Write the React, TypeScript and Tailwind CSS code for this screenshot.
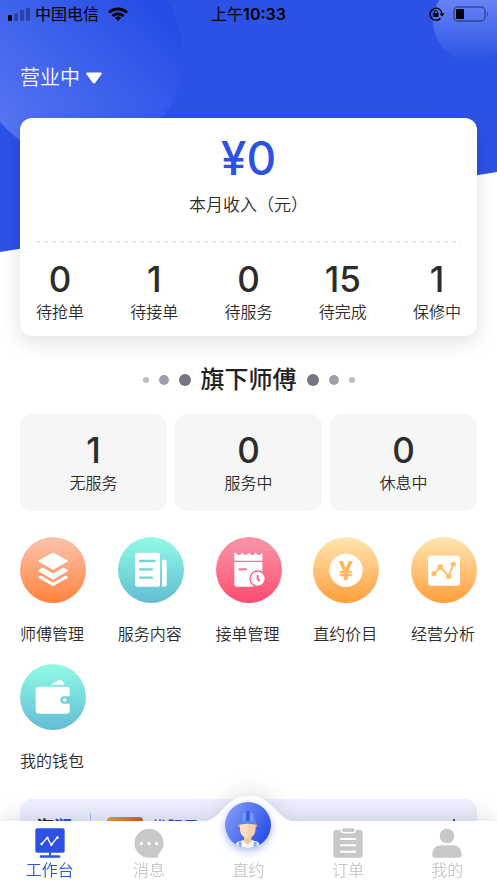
import { useState } from 'react';
import type { ReactNode } from 'react';

const orderStats = [
    { label: '待抢单', value: 0 },
    { label: '待接单', value: 1 },
    { label: '待服务', value: 0 },
    { label: '待完成', value: 15 },
    { label: '保修中', value: 1 },
];

const workerStats = [
    { label: '无服务', value: 1 },
    { label: '服务中', value: 0 },
    { label: '休息中', value: 0 },
];

const LayersIcon = () => (
    <svg viewBox="0 0 198 198" fill="#fff" stroke="#fff" strokeWidth="3" strokeLinejoin="round" aria-hidden="true">
        <path d="M99 48 143 72 99 97 56 72Z" />
        <path d="M56 101 69 93 99 111 130 93 143 101 99 127Z" />
        <path d="M56 121 62 117 99 138 137 117 143 121 99 146Z" />
    </svg>
);

const DocumentIcon = () => (
    <svg viewBox="0 0 198 198" fill="#fff" aria-hidden="true">
        <rect x="51" y="47" width="75" height="102" rx="6" />
        <path d="M132 68h8q6 0 6 6v68q0 7-8 7h-6Z" />
        <g stroke="#74d5d8" strokeWidth="7" strokeLinecap="round">
            <path d="M66 72h44M66 97h36M66 122h36" />
        </g>
    </svg>
);

const ReceiptIcon = () => (
    <svg viewBox="0 0 198 198" fill="#fff" aria-hidden="true">
        <path d="M55 47h5q3 7 9 7t9-7h2q3 7 9 7t9-7h2q3 7 9 7t9-7h2q3 7 9 7t9-7h1v24H55Z" />
        <path d="M55 75h84v74H61q-6 0-6-6Z" />
        <path d="M68 97h24" stroke="#ff6f8e" strokeWidth="6" />
        <path d="M139 122v30h-30Z" fill="#ff587d" />
        <circle cx="125" cy="125" r="23" stroke="#ff6384" strokeWidth="4" />
        <path d="M125 114v11l6 7" fill="none" stroke="#ff6384" strokeWidth="6" />
    </svg>
);

const YuanIcon = () => (
    <svg viewBox="0 0 198 198" aria-hidden="true">
        <circle cx="99" cy="100" r="50" fill="#fff" />
        <text x="99" y="129" textAnchor="middle" fill="#ffb95c" className="text-[80px] font-bold font-['Roboto',sans-serif]">
            ¥
        </text>
    </svg>
);

const ChartIcon = () => (
    <svg viewBox="0 0 198 198" aria-hidden="true">
        <rect x="51" y="56" width="96" height="90" rx="9" fill="#fff" />
        <path d="M69 110 88 90 113 118 127 82" fill="none" stroke="#ffbf68" strokeWidth="6" />
        <g fill="#ffbf68">
            <circle cx="69" cy="110" r="8" />
            <circle cx="88" cy="90" r="8" />
            <circle cx="113" cy="118" r="8" />
            <circle cx="127" cy="82" r="8" />
        </g>
    </svg>
);

const WalletIcon = () => (
    <svg viewBox="0 0 198 198" fill="#fff" aria-hidden="true">
        <path d="M92 62 115 49q9-5 14 4l4 9Z" />
        <rect x="47" y="68" width="102" height="81" rx="9" />
        <path d="M150 97h-18a11 11 0 0 0 0 22h18Z" fill="#75d3d8" />
        <circle cx="134" cy="108" r="5" />
    </svg>
);

const services: { label: string; color: string; icon: ReactNode }[] = [
    { label: '师傅管理', color: 'from-[#fac3ab] to-[#ff8139]', icon: <LayersIcon /> },
    { label: '服务内容', color: 'from-[#91fbe4] to-[#63bdd3]', icon: <DocumentIcon /> },
    { label: '接单管理', color: 'from-[#f595a9] to-[#ff4770]', icon: <ReceiptIcon /> },
    { label: '直约价目', color: 'from-[#ffe6b0] to-[#ff9e34]', icon: <YuanIcon /> },
    { label: '经营分析', color: 'from-[#ffe6b0] to-[#ff9e34]', icon: <ChartIcon /> },
    { label: '我的钱包', color: 'from-[#91fbe4] to-[#63bdd3]', icon: <WalletIcon /> },
];

const MonitorIcon = () => (
    <svg viewBox="0 0 90 90" className="size-[30px]" fill="currentColor" aria-hidden="true">
        <rect x="1" y="1" width="88" height="73" rx="5" />
        <path d="M42 73h6v10h-6z" />
        <rect x="14" y="82" width="62" height="7" rx="3" />
        <path d="M20 48 37 29 49 51 66 29" fill="none" stroke="#fff" strokeWidth="4" />
        <g fill="#fff">
            <circle cx="20" cy="48" r="4" />
            <circle cx="37" cy="30" r="4" />
            <circle cx="49" cy="50" r="4" />
            <circle cx="67" cy="29" r="4" />
        </g>
    </svg>
);

const ChatIcon = () => (
    <svg viewBox="0 0 90 90" className="size-[30px]" fill="currentColor" aria-hidden="true">
        <path d="M45 2a43 43 0 0 1 32 72l-4 4v7q0 4-4 4H45a43 43 0 0 1 0-87Z" />
        <g fill="#fff">
            <circle cx="22" cy="47" r="5" />
            <circle cx="45" cy="47" r="5" />
            <circle cx="68" cy="47" r="5" />
        </g>
    </svg>
);

const ClipboardIcon = () => (
    <svg viewBox="0 0 90 90" className="size-[30px]" fill="currentColor" aria-hidden="true">
        <rect x="1" y="6" width="88" height="83" rx="8" />
        <rect x="25" y="-1" width="42" height="15" rx="7" stroke="#fff" strokeWidth="4" />
        <path d="M24 33h43M24 52h43M24 71h43" stroke="#fff" strokeWidth="6" strokeLinecap="round" />
    </svg>
);

const PersonIcon = () => (
    <svg viewBox="0 0 90 90" className="size-[30px]" fill="currentColor" aria-hidden="true">
        <circle cx="45" cy="24" r="22" />
        <path d="M1 80C1 62 13 52 28 52h34c15 0 27 10 27 28v2q0 7-7 7H8q-7 0-7-7Z" />
    </svg>
);

const WorkerAvatar = () => (
    <svg viewBox="0 0 138 138" className="size-[46px] rounded-full shadow-[0_3px_8px_rgba(44,82,229,0.4)]" aria-hidden="true">
        <defs>
            <linearGradient id="avatar-bg" x1="0" y1="0" x2="1" y2="0.6">
                <stop offset="0" stopColor="#8aa2fb" />
                <stop offset="1" stopColor="#2b50e6" />
            </linearGradient>
        </defs>
        <rect width="138" height="138" fill="url(#avatar-bg)" />
        <path d="M33 138v-13c4-8 16-8 24-11h22c8 3 20 3 24 11v13Z" fill="#f4f8ff" />
        <path d="M41 119h9v19h-9zM86 119h9v19h-9z" fill="#8fabfa" />
        <path d="M57 98h22v20l-11 11-11-11Z" fill="#f0c5a1" />
        <circle cx="43" cy="71" r="4" fill="#d9a98a" />
        <circle cx="93" cy="71" r="4" fill="#d9a98a" />
        <path d="M45 62h46v20c0 16-12 27-23 27S45 98 45 82Z" fill="#fcdcc2" />
        <path d="M68 62h23v20c0 16-12 27-23 27Z" fill="#f6cfae" />
        <path d="M44 61c0-20 9-33 24-33s24 13 24 33Z" fill="#5a80f5" />
        <path d="M53 35q4-4 8-5v27h-8zM76 30q4 1 8 5v22h-8z" fill="#7c9af9" />
        <path d="M64 27h9v31h-9z" fill="#2f57e4" />
        <path d="M42 59q26-6 52 0 2 8-2 9-24-5-48 0-4-1-2-9Z" fill="#5f82f3" />
    </svg>
);

const tabs: { label: string; icon: ReactNode }[] = [
    { label: '工作台', icon: <MonitorIcon /> },
    { label: '消息', icon: <ChatIcon /> },
    { label: '直约', icon: <WorkerAvatar /> },
    { label: '订单', icon: <ClipboardIcon /> },
    { label: '我的', icon: <PersonIcon /> },
];

const StatusBar = () => (
    <div className="grid grid-cols-[1fr_auto_1fr] items-center px-2 h-7 text-base leading-7 text-black">
        <div className="flex items-center gap-[5px]">
            <svg viewBox="0 0 22 14" className="w-[22px] h-[14px]" aria-hidden="true">
                <rect x="0" y="8" width="4" height="6" rx="1" />
                <g opacity="0.3">
                    <rect x="6" y="6" width="4" height="8" rx="1" />
                    <rect x="12" y="3" width="4" height="11" rx="1" />
                    <rect x="18" y="1" width="4" height="13" rx="1" />
                </g>
            </svg>
            <span>中国电信</span>
            <svg viewBox="0 0 20 14" className="w-5 h-[14px] ml-1" fill="none" stroke="#000" strokeWidth="3" aria-hidden="true">
                <path d="M1 5.5a13 13 0 0 1 18 0M4.500 9a8 8 0 0 1 11 0" />
                <path d="M10 14 6.800 10.800a4.500 4.500 0 0 1 6.400 0Z" fill="#000" stroke="none" />
            </svg>
        </div>
        <span>
            上午<span className="font-semibold">10:33</span>
        </span>
        <div className="flex items-center justify-end gap-2">
            <svg viewBox="0 0 16 14" className="w-4 h-[14px]" fill="none" stroke="#000" aria-hidden="true">
                <path d="M11.500 11.200A6 6 0 1 1 13 7" strokeWidth="1.300" />
                <path d="M10.500 6.500h5L13 9.500Z" fill="#000" stroke="none" />
                <rect x="4.500" y="6" width="5" height="4" fill="#000" stroke="none" />
                <path d="M5.500 6V5a1.500 1.500 0 0 1 3 0v1" />
            </svg>
            <svg viewBox="0 0 36 16" className="w-9 h-4" aria-hidden="true">
                <rect x="1" y="1" width="31" height="14" rx="4" fill="none" stroke="#000" strokeOpacity="0.4" strokeWidth="1.500" />
                <rect x="3" y="3" width="8" height="10" rx="1" />
                <path d="M34 5.500q2 2.500 0 5Z" opacity="0.5" />
            </svg>
        </div>
    </div>
);

const HeaderBackground = () => (
    <div
        className="absolute inset-x-0 top-0 h-[252px] overflow-hidden bg-[#2c52e5] [clip-path:polygon(0_0,100%_0,100%_172px,0_100%)]"
        aria-hidden="true"
    >
        <div className="absolute -left-6 -top-12 size-[207px] rounded-full bg-linear-to-tr from-[#5f7cf5] to-[#274ce5] to-80%" />
        <div className="absolute -right-[15px] -top-[18px] size-[79px] rounded-full bg-linear-to-b from-[#7890fa] to-[#2c52e5]" />
    </div>
);

const Stat = ({ value, label }: { value: number; label: string }) => (
    <div className="flex flex-col items-center gap-[3px] min-w-12">
        <span className="text-[35px] leading-9 font-medium text-[#2c2c2c]">{value}</span>
        <span className="text-base leading-6 font-[350] text-[#2c2c2c]">{label}</span>
    </div>
);

const IncomeCard = () => (
    <section className="mx-5 px-4 pt-4 pb-3 rounded-xl bg-white shadow-[0_6px_20px_rgba(0,0,0,0.12)]">
        <p className="text-center text-[46px] leading-12 font-medium text-[#2c52e5]">¥0</p>
        <p className="mt-[11px] text-center text-[17px] leading-6 font-[350] text-[#2c2c2c]">本月收入（元）</p>
        <div className="mt-6 h-px bg-[repeating-linear-gradient(90deg,#dcdcdc_0_4px,transparent_4px_8px)]" />
        <div className="mt-[19px] flex justify-between">
            {orderStats.map((s) => (
                <Stat key={s.label} {...s} />
            ))}
        </div>
    </section>
);

const TitleDots = ({ flip = false }: { flip?: boolean }) => (
    <span className={`flex items-center gap-[10px] ${flip ? 'flex-row-reverse' : ''}`} aria-hidden="true">
        <span className="size-[6px] rounded-full bg-[#bdbdbf]" />
        <span className="size-[10px] rounded-full bg-[#9f9fa5]" />
        <span className="size-3 rounded-full bg-[#777580]" />
    </span>
);

const Banner = () => (
    <section className="mx-5 mt-[26px] h-20 px-4 pt-[14px] flex items-start rounded-xl bg-linear-to-b from-[#edf0fe] to-[#dfe5fb]">
        <strong className="mt-1 text-[18px] leading-[22px] font-bold text-[#2c2c2c]">
            海<span className="text-[#2c52e5]">润</span>
        </strong>
        <span className="ml-[18px] w-px h-10 bg-[#a9b8f5]" />
        <span className="mt-1 ml-4 w-9 h-5 rounded-sm bg-linear-to-r from-[#e8a137] to-[#df5427]" />
        <span className="mt-1 ml-2 text-base leading-5 font-medium text-[#2c52e5]">优服局</span>
        <span className="mt-[6px] ml-auto mr-[6px] size-[2px] bg-[#2c52e5]" />
    </section>
);

const TabBar = () => {
    const [active, setActive] = useState('工作台');

    return (
        <nav className="relative bg-white drop-shadow-[0_-3px_10px_rgba(0,0,0,0.12)]">
            <svg
                viewBox="0 0 100 27"
                className="absolute bottom-full left-1/2 -translate-x-1/2 -mb-px w-[100px] h-[27px]"
                fill="#fff"
                aria-hidden="true"
            >
                <path d="M0 27C14 27 18 20 26 12C33 4 41 1 50 1S67 4 74 12C82 20 86 27 100 27Z" />
            </svg>
            <div className="relative grid grid-cols-5 items-end pt-[7px]">
                {tabs.map((tab) => (
                    <button
                        key={tab.label}
                        onClick={() => setActive(tab.label)}
                        className={`flex flex-col items-center text-base leading-[25px] font-[350] ${
                            tab.label === '直约' ? '-mt-[26px] gap-[10px]' : ''
                        } ${active === tab.label ? 'text-[#2c52e5]' : 'text-[#c8c8c8]'}`}
                    >
                        {tab.icon}
                        <span>{tab.label}</span>
                    </button>
                ))}
            </div>
        </nav>
    );
};

export default function App() {
    return (
        <div className="h-screen flex flex-col bg-white font-['Inter','Noto_Sans_CJK_SC',sans-serif]">
            <main className="relative flex-1 min-h-0 overflow-y-auto [scrollbar-width:none]">
                <HeaderBackground />
                <div className="relative">
                    <StatusBar />
                    <label className="mt-[34px] mb-6 ml-5 inline-flex items-center gap-[6px] h-8 text-white">
                        <select
                            aria-label="营业状态"
                            className="appearance-none bg-transparent text-xl leading-8 font-[350] [field-sizing:content] outline-none"
                        >
                            <option>营业中</option>
                            <option>休息中</option>
                        </select>
                        <svg viewBox="0 0 16 12" className="w-4 h-3" fill="#fff" aria-hidden="true">
                            <path d="M1.500 0.500h13q2 0 1 1.800L9.500 10.500q-1.500 1.800-3 0L0.500 2.300q-1-1.800 1-1.800Z" />
                        </svg>
                    </label>
                    <IncomeCard />
                    <h2 className="mt-7 flex items-center justify-center gap-[10px] text-2xl leading-8 font-medium text-[#222]">
                        <TitleDots />
                        旗下师傅
                        <TitleDots flip />
                    </h2>
                    <section className="mx-5 mt-[18px] grid grid-cols-3 gap-2">
                        {workerStats.map((s) => (
                            <div key={s.label} className="pt-[18px] pb-4 rounded-xl bg-[#f6f6f6]">
                                <Stat {...s} />
                            </div>
                        ))}
                    </section>
                    <section className="mx-5 mt-[26px] grid grid-cols-[repeat(5,66px)] justify-between gap-y-[18px]">
                        {services.map((s) => (
                            <button key={s.label} className="text-left text-base leading-6 font-[350] text-[#2c2c2c]">
                                <span className={`block size-[66px] rounded-full bg-linear-to-b ${s.color}`}>{s.icon}</span>
                                <span className="block mt-[19px]">{s.label}</span>
                            </button>
                        ))}
                    </section>
                    <Banner />
                </div>
            </main>
            <TabBar />
        </div>
    );
}
